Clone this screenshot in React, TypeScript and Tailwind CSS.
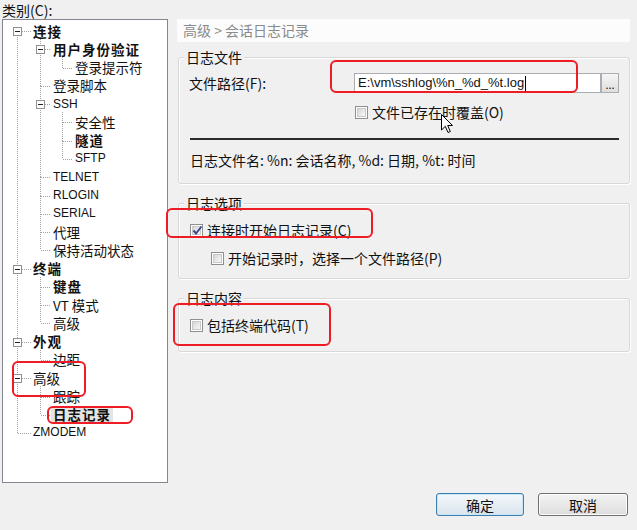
import React from "react";

type Row = { label: string; level: number; bold?: boolean; exp?: boolean; sel?: boolean; latin?: boolean };

const rows: Row[] = [
  { label: "连接", level: 0, bold: true, exp: true },
  { label: "用户身份验证", level: 1, bold: true, exp: true },
  { label: "登录提示符", level: 2 },
  { label: "登录脚本", level: 1 },
  { label: "SSH", level: 1, exp: true, latin: true },
  { label: "安全性", level: 2 },
  { label: "隧道", level: 2, bold: true },
  { label: "SFTP", level: 2, latin: true },
  { label: "TELNET", level: 1, latin: true },
  { label: "RLOGIN", level: 1, latin: true },
  { label: "SERIAL", level: 1, latin: true },
  { label: "代理", level: 1 },
  { label: "保持活动状态", level: 1 },
  { label: "终端", level: 0, bold: true, exp: true },
  { label: "键盘", level: 1, bold: true },
  { label: "VT 模式", level: 1 },
  { label: "高级", level: 1 },
  { label: "外观", level: 0, bold: true, exp: true },
  { label: "边距", level: 1 },
  { label: "高级", level: 0, exp: true },
  { label: "跟踪", level: 1 },
  { label: "日志记录", level: 1, bold: true, sel: true },
  { label: "ZMODEM", level: 0, latin: true },
];

const ROW = 18.27;
const GX = [14, 37, 59];
const TX = [30, 50, 72];
const PL = ["pl-[30px]", "pl-[50px]", "pl-[72px]"];

function TreeLines() {
  const cy = (i: number) => Math.round(2 + ROW * i + ROW / 2);
  const els: React.ReactNode[] = [];
  rows.forEach((r, i) => {
    const L = r.level;
    const gx = GX[L] + 0.5;
    els.push(
      <line key={"h" + i} x1={GX[L] + (r.exp ? 5 : 1)} x2={TX[L] - 2} y1={cy(i) + 0.5} y2={cy(i) + 0.5} />
    );
    let prev = -1;
    for (let j = i - 1; j >= 0; j--) {
      if (rows[j].level <= L) {
        prev = j;
        break;
      }
    }
    if (prev >= 0) {
      if (rows[prev].level === L) {
        els.push(<line key={"v" + i} x1={gx} x2={gx} y1={cy(prev)} y2={cy(i)} />);
      } else {
        els.push(<line key={"v" + i} x1={gx} x2={gx} y1={cy(prev) + 8} y2={cy(i)} />);
      }
    }
  });
  const boxes = rows.map((r, i) =>
    r.exp ? (
      <g key={"b" + i}>
        <rect x={GX[r.level] - 4 + 0.5} y={cy(i) - 4 + 0.5} width={8} height={8} fill="#fdfdfd" stroke="#919191" />
        <line x1={GX[r.level] - 2} x2={GX[r.level] + 3} y1={cy(i) + 0.5} y2={cy(i) + 0.5} stroke="#222" />
      </g>
    ) : null
  );
  return (
    <svg className="absolute left-0 top-0" width="164" height="462" shapeRendering="crispEdges">
      <g stroke="#a0a0a0" strokeDasharray="1 1" fill="none">
        {els}
      </g>
      {boxes}
    </svg>
  );
}

function Check({ checked }: { checked?: boolean }) {
  return (
    <span className="w-[13px] h-[13px] shrink-0 border border-[#8e8f8f] bg-white p-[1px] flex">
      <span className="relative flex-1 border border-[#c9c9c9] bg-linear-to-br from-[#d6d6d6] to-[#f8f8f8]">
        {checked && (
          <svg className="absolute -left-[1px] -top-[2px]" width="11" height="11" viewBox="0 0 11 11">
            <path d="M1.5 5.5 L4 8.5 L9.5 1.5" stroke="#3b4a8c" strokeWidth="2" fill="none" />
          </svg>
        )}
      </span>
    </span>
  );
}

function CheckRow({ label, checked, cls }: { label: string; checked?: boolean; cls: string }) {
  return (
    <div className={"flex items-center h-[18px] gap-[4px] text-[14px] leading-[18px] text-[#111] " + cls}>
      <Check checked={checked} />
      <span>{label}</span>
    </div>
  );
}

function Group({ title, cls, children }: { title: string; cls: string; children?: React.ReactNode }) {
  return (
    <div
      className={
        "relative ml-[1px] w-[452px] border border-[#d8d8d8] rounded-[3px] shadow-[inset_1px_1px_0_#ffffff,1px_1px_0_#ffffff] " +
        cls
      }
    >
      <span className="absolute left-[5px] -top-[10px] px-[2px] bg-[#f0f0f0] text-[14px] leading-[18px] text-[#111]">
        {title}
      </span>
      {children}
    </div>
  );
}

function RedBox({ cls }: { cls: string }) {
  return <div className={"absolute border-[2.5px] border-[#ee1c24] rounded-[6px] " + cls} />;
}

export default function App() {
  return (
    <div className="relative w-[637px] h-[530px] bg-[#f0f0f0] overflow-hidden font-['Noto_Sans_CJK_SC','Noto_Sans',sans-serif] text-[#111]">
      <div className="flex">
        {/* left */}
        <div className="pl-[2px] w-[168px]">
          <div className="h-[19px] leading-[18px] text-[14px] pt-[1px]">类别(C):</div>
          <div className="relative w-[166px] h-[464px] border border-[#828790] bg-white">
            <TreeLines />
            <div className="relative pt-[2px]">
              {rows.map((r, i) => (
                <div key={i} className={"flex items-center h-[18.27px] " + PL[r.level]}>
                  <span
                    className={
                      (r.latin
                        ? "font-['Liberation_Sans',sans-serif] text-[12px] leading-[17px] "
                        : "text-[13.5px] leading-[17px] ") +
                      "text-[#111] " +
                      (r.bold ? "font-bold tracking-[1px] " : "") +
                      (r.sel ? "bg-[#e4e4e4] -ml-[2px] px-[2px]" : "")
                    }
                  >
                    {r.label}
                  </span>
                </div>
              ))}
            </div>
          </div>
        </div>

        {/* right */}
        <div className="ml-[9px] w-[453px] pt-[19px] flex flex-col">
          <div className="h-[23px] bg-[#fcfcfc] pl-[6px] flex items-center text-[14px] text-[#8a8a8a]">
            高级 &gt; 会话日志记录
          </div>

          <Group title="日志文件" cls="mt-[15px] h-[127px] pt-[15px]">
            <div className="flex items-center h-[20px] pl-[10px]">
              <span className="w-[165px] text-[14px] leading-[18px]">文件路径(F):</span>
              <div className="w-[247px] h-[20px] bg-white border border-[#abadb3] flex items-center pl-[3px] font-['Liberation_Sans',sans-serif] text-[13px] leading-[16px] text-[#111]">
                <span>E:\vm\sshlog\%n_%d_%t.log</span>
                <span className="inline-block w-[1px] h-[15px] bg-black ml-[1px]" />
              </div>
              <div className="w-[18px] h-[20px] border border-[#acacac] bg-linear-to-b from-[#f6f6f6] to-[#dedede] flex items-end justify-center text-[11px] leading-[14px] pb-[1px]">
                ...
              </div>
            </div>
            <CheckRow label="文件已存在时覆盖(O)" cls="mt-[10px] pl-[176px]" />
            <div className="mt-[17px] ml-[11px] w-[429px] h-[2px] bg-[#2b2b2b]" />
            <div className="mt-[11px] pl-[11px] h-[18px] text-[14px] leading-[18px]">
              日志文件名: %n: 会话名称, %d: 日期, %t: 时间
            </div>
          </Group>

          <Group title="日志选项" cls="mt-[19px] h-[76px] pt-[17px]">
            <CheckRow label="连接时开始日志记录(C)" checked cls="pl-[11px]" />
            <CheckRow label="开始记录时，选择一个文件路径(P)" cls="mt-[10px] pl-[32px]" />
          </Group>

          <Group title="日志内容" cls="mt-[19px] h-[54px] pt-[17px]">
            <CheckRow label="包括终端代码(T)" cls="pl-[11px]" />
          </Group>

          <div className="mt-[141px] flex justify-end gap-[14px] pr-[2px]">
            <button className="w-[88px] h-[23px] rounded-[3px] border border-[#3c7fb1] bg-linear-to-b from-[#f4f8fb] to-[#d9e4ec] shadow-[inset_0_0_0_1px_#c8e6f7] text-[14px] leading-[20px] text-[#111]">
              确定
            </button>
            <button className="w-[90px] h-[23px] rounded-[3px] border border-[#707070] bg-linear-to-b from-[#f4f4f4] to-[#dddddd] shadow-[inset_0_0_0_1px_#fbfbfb] text-[14px] leading-[20px] text-[#111]">
              取消
            </button>
          </div>
        </div>
      </div>

      {/* annotations */}
      <RedBox cls="left-[330px] top-[60px] w-[248px] h-[33px]" />
      <RedBox cls="left-[166px] top-[208px] w-[207px] h-[30px]" />
      <RedBox cls="left-[173px] top-[303px] w-[158px] h-[43px]" />
      <RedBox cls="left-[12px] top-[361px] w-[74px] h-[36px]" />
      <RedBox cls="left-[47px] top-[406px] w-[86px] h-[18px]" />

      {/* mouse cursor */}
      <svg className="absolute left-[441px] top-[114px]" width="14" height="21" viewBox="0 0 14 21">
        <path
          d="M0.5 0.5 L0.5 16 L4.3 12.3 L7 18.5 L9.3 17.5 L6.7 11.5 L11.5 11.5 Z"
          fill="#ffffff"
          stroke="#000000"
          strokeWidth="1"
          strokeLinejoin="round"
        />
      </svg>
    </div>
  );
}
